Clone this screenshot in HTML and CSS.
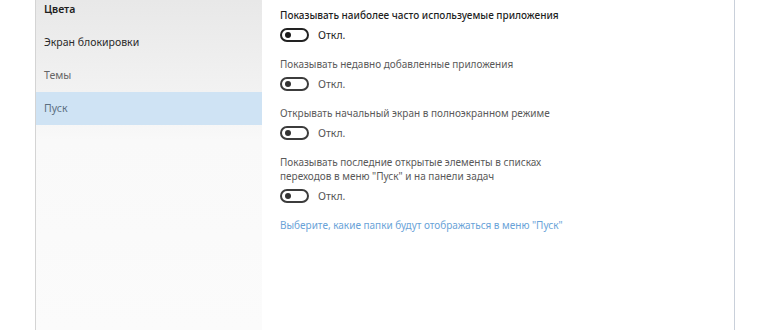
FILE: index.html
```html
<!DOCTYPE html>
<html lang="ru">
<head>
<meta charset="utf-8">
<link rel="stylesheet" href="styles.css">
</head>
<body>
<div class="window">
  <nav class="sidebar">
    <ul class="nav">
      <li class="nav-item nav-strong">Цвета</li>
      <li class="nav-item nav-dark">Экран блокировки</li>
      <li class="nav-item">Темы</li>
      <li class="nav-item nav-active">Пуск</li>
    </ul>
  </nav>
  <main class="content">
    <section class="group">
      <div class="title title-strong">Показывать наиболее часто используемые приложения</div>
      <div class="toggle-row toggle-strong"><span class="toggle"><span class="knob"></span></span><span class="state">Откл.</span></div>
    </section>
    <section class="group">
      <div class="title">Показывать недавно добавленные приложения</div>
      <div class="toggle-row"><span class="toggle"><span class="knob"></span></span><span class="state">Откл.</span></div>
    </section>
    <section class="group">
      <div class="title">Открывать начальный экран в полноэкранном режиме</div>
      <div class="toggle-row"><span class="toggle"><span class="knob"></span></span><span class="state">Откл.</span></div>
    </section>
    <section class="group">
      <div class="title">Показывать последние открытые элементы в списках<br>переходов в меню "Пуск" и на панели задач</div>
      <div class="toggle-row"><span class="toggle"><span class="knob"></span></span><span class="state">Откл.</span></div>
    </section>
    <a class="link" href="#">Выберите, какие папки будут отображаться в меню "Пуск"</a>
  </main>
</div>
</body>
</html>
```
FILE: styles.css
```css
html, body {
  margin: 0;
  padding: 0;
  background: #ffffff;
  height: 100%;
  overflow: hidden;
}
body {
  font-family: "Noto Sans", "Open Sans", sans-serif;
  font-size: 10px;
  color: #555;
}
.window {
  margin-left: 35px;
  width: 698px;
  height: 330px;
  display: flex;
  border-left: 1px solid #d4d4d4;
  border-right: 1px solid #c9d0da;
  background: #fff;
}
.sidebar {
  width: 226px;
  flex: none;
  background: linear-gradient(to bottom, #e8e8e8 0px, #f4f4f4 110px, #f9f9f9 140px, #fbfbfb 330px);
}
.nav {
  list-style: none;
  margin: -7px 0 0 0;
  padding: 0;
}
.nav-item {
  height: 33px;
  line-height: 33px;
  padding-left: 8px;
  font-size: 10.5px;
  color: #666;
}
.nav-strong {
  color: #1e1e1e;
  font-weight: 600;
}
.nav-dark {
  color: #2a2a2a;
}
.nav-active {
  background: #cfe3f4;
  color: #5c6f80;
}
.content {
  flex: 1;
  padding: 8px 0 0 18px;
  display: flex;
  flex-direction: column;
  gap: 14px;
}
.group {
  display: flex;
  flex-direction: column;
  gap: 5px;
}
.title {
  line-height: 14px;
  color: #5a5a5a;
}
.title-strong {
  color: #1e1e1e;
  font-weight: 500;
}
.toggle-row {
  display: flex;
  align-items: center;
  height: 16px;
  gap: 9px;
}
.toggle {
  box-sizing: border-box;
  width: 29px;
  height: 14px;
  border: 2px solid #3c3c3c;
  border-radius: 7px;
  display: flex;
  align-items: center;
  padding-left: 3px;
}
.knob {
  width: 6px;
  height: 6px;
  border-radius: 50%;
  background: #333;
}
.toggle-strong .toggle {
  border-color: #222;
}
.toggle-strong .knob {
  background: #1a1a1a;
}
.state {
  color: #555;
  font-size: 10.5px;
}
.toggle-strong .state {
  color: #222;
}
.link {
  color: #6aa3d8;
  text-decoration: none;
  line-height: 14px;
}
```
